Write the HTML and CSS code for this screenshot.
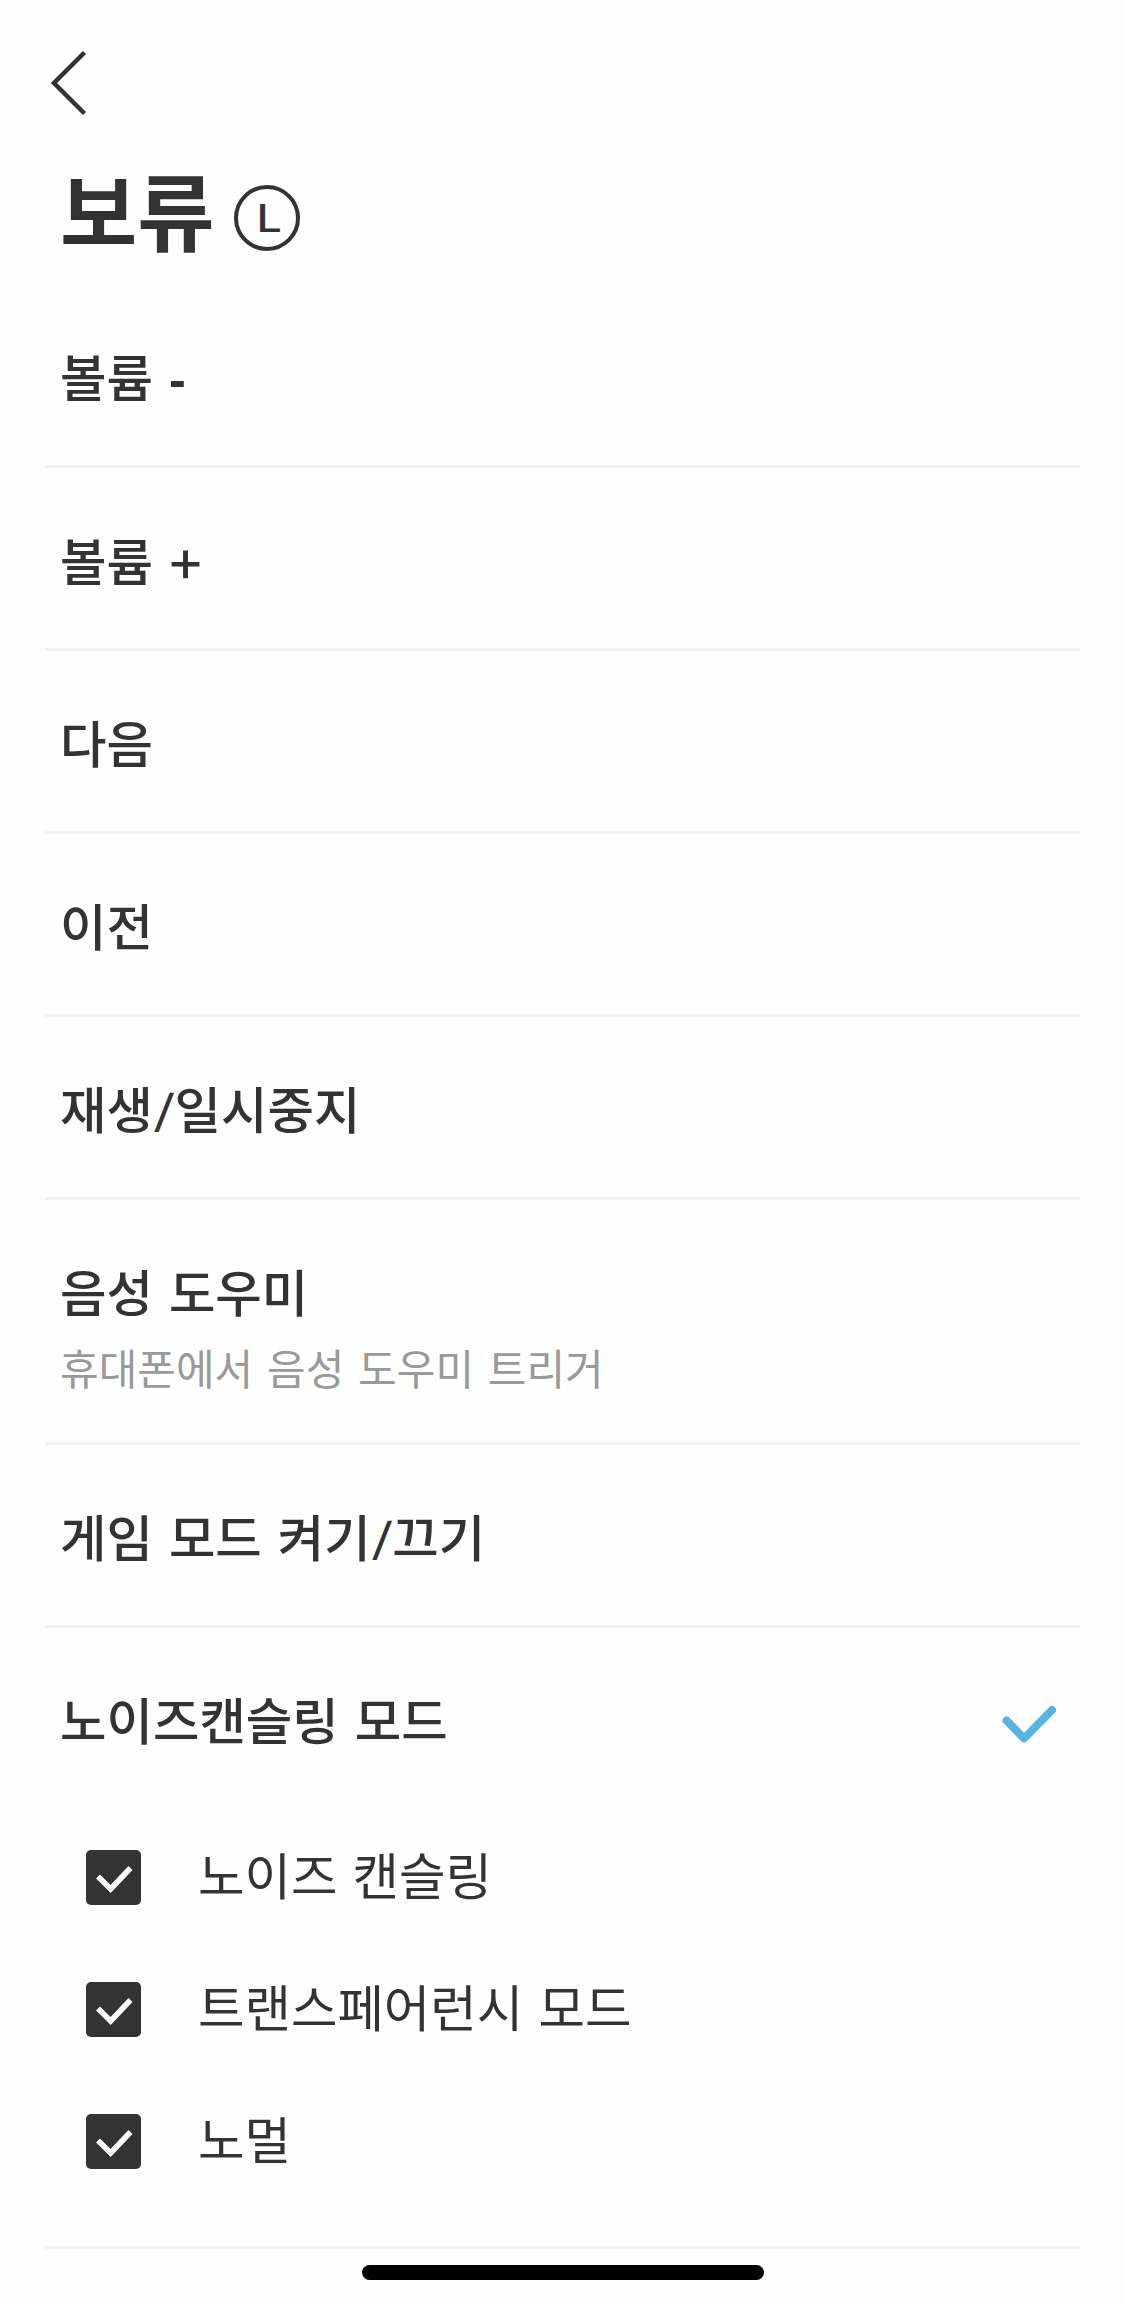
FILE: index.html
```html
<!DOCTYPE html>
<html lang="ko">
<head>
<meta charset="utf-8">
<title>보류</title>
<link rel="stylesheet" href="styles.css">
</head>
<body>
<main class="screen">
  <nav class="nav">
    <svg class="back" viewBox="0 0 40 66" aria-hidden="true"><path d="M35.500 2.500 5 33 35.500 63.500"/></svg>
  </nav>
  <header class="header">
    <h1 class="title">보류</h1>
    <span class="side"><span class="side-letter">L</span></span>
  </header>
  <ul class="list">
    <li class="row"><span class="label">볼륨 <span class="minus">-</span></span></li>
    <li class="row"><span class="label">볼륨 <span class="plus">+</span></span></li>
    <li class="row"><span class="label">다음</span></li>
    <li class="row"><span class="label">이전</span></li>
    <li class="row"><span class="label">재생<span class="slash">/</span>일시중지</span></li>
    <li class="row row-described">
      <span class="label">음성 도우미</span>
      <span class="description">휴대폰에서 음성 도우미 트리거</span>
    </li>
    <li class="row"><span class="label">게임 모드 켜기<span class="slash">/</span>끄기</span></li>
    <li class="row row-expanded">
      <div class="selected">
        <span class="label">노이즈캔슬링 모드</span>
        <svg class="tick" viewBox="0 0 56 40" aria-hidden="true"><path d="M5.500 15.5 23 33.500 51 5"/></svg>
      </div>
      <ul class="modes">
        <li class="mode"><svg class="box" viewBox="0 0 55 55" aria-hidden="true"><rect width="55" height="55" rx="5"/><path d="M12 26.500 24.700 39 44.500 18"/></svg><span class="mode-label">노이즈 캔슬링</span></li>
        <li class="mode"><svg class="box" viewBox="0 0 55 55" aria-hidden="true"><rect width="55" height="55" rx="5"/><path d="M12 26.500 24.700 39 44.500 18"/></svg><span class="mode-label">트랜스페어런시 모드</span></li>
        <li class="mode"><svg class="box" viewBox="0 0 55 55" aria-hidden="true"><rect width="55" height="55" rx="5"/><path d="M12 26.500 24.700 39 44.500 18"/></svg><span class="mode-label">노멀</span></li>
      </ul>
    </li>
  </ul>
  <div class="home-bar"></div>
</main>
</body>
</html>
```
FILE: styles.css
```css
* { box-sizing: border-box; }

body {
  margin: 0;
  background: #fefefe;
  color: #333;
  font-family: Inter, "Noto Sans CJK KR", sans-serif;
}

ul { margin: 0; padding: 0; list-style: none; }

svg { display: block; fill: none; flex: none; }

.screen {
  display: flex;
  flex-direction: column;
  width: 1125px;
  height: 2304px;
  overflow: hidden;
}

.nav { height: 157px; padding: 50px 0 0 49px; }

.back { width: 40px; height: 66px; stroke: #333; stroke-width: 4.5; }

.header {
  display: flex;
  align-items: center;
  gap: 19px;
  height: 118px;
  padding-left: 60px;
}

.title { margin: 0 0 3px; font-size: 84px; line-height: 115px; font-weight: 700; }

.side {
  display: flex;
  align-items: center;
  justify-content: center;
  width: 66px;
  height: 66px;
  margin-top: 3px;
  border: 4.5px solid #333;
  border-radius: 50%;
  font-size: 38px;
  line-height: 1;
  font-weight: 500;
}

.side-letter { padding-left: 5px; transform: scaleX(1.18); }

.list { display: flex; flex-direction: column; padding: 7px 45px 0; }

.row {
  display: flex;
  flex-direction: column;
  height: 183px;
  padding: 62px 15px 0;
  border-bottom: 3px solid #f2f2f2;
}

.list > .row:first-child { height: 186px; padding-top: 65px; }

.row-described { height: 245px; }
.row-expanded { height: 621px; }

.label { font-size: 50.500px; line-height: 64px; font-weight: 500; word-spacing: 2.500px; }

.minus { font-family: "Liberation Sans", sans-serif; font-weight: 700; }

.plus { margin-left: -3px; font-size: 59px; line-height: 1; font-weight: 400; }

.slash {
  display: inline-block;
  margin: 0 2px 0 3px;
  font-size: 45px;
  line-height: 1;
  transform: translateY(-2px) skewX(-7deg);
}

.description { margin-top: 16px; font-size: 42px; line-height: 56px; color: #999; word-spacing: 2px; }

.selected { display: flex; justify-content: space-between; padding-right: 8px; }

.tick { width: 56px; height: 40px; margin-top: 15px; stroke: #55b4e5; stroke-width: 8; stroke-linecap: round; stroke-linejoin: round; }

.modes { padding: 57px 0 0 26px; }

.mode { display: flex; align-items: center; gap: 57px; height: 132px; }

.box { width: 55px; height: 55px; }
.box rect { fill: #333; }
.box path { stroke: #fff; stroke-width: 5.500; }

.mode-label { margin-bottom: 1px; font-size: 50.500px; line-height: 64px; word-spacing: 1px; }

.home-bar {
  width: 402px;
  height: 15px;
  margin: 16px 0 0 362px;
  border-radius: 8px;
  background: #000;
}
```
